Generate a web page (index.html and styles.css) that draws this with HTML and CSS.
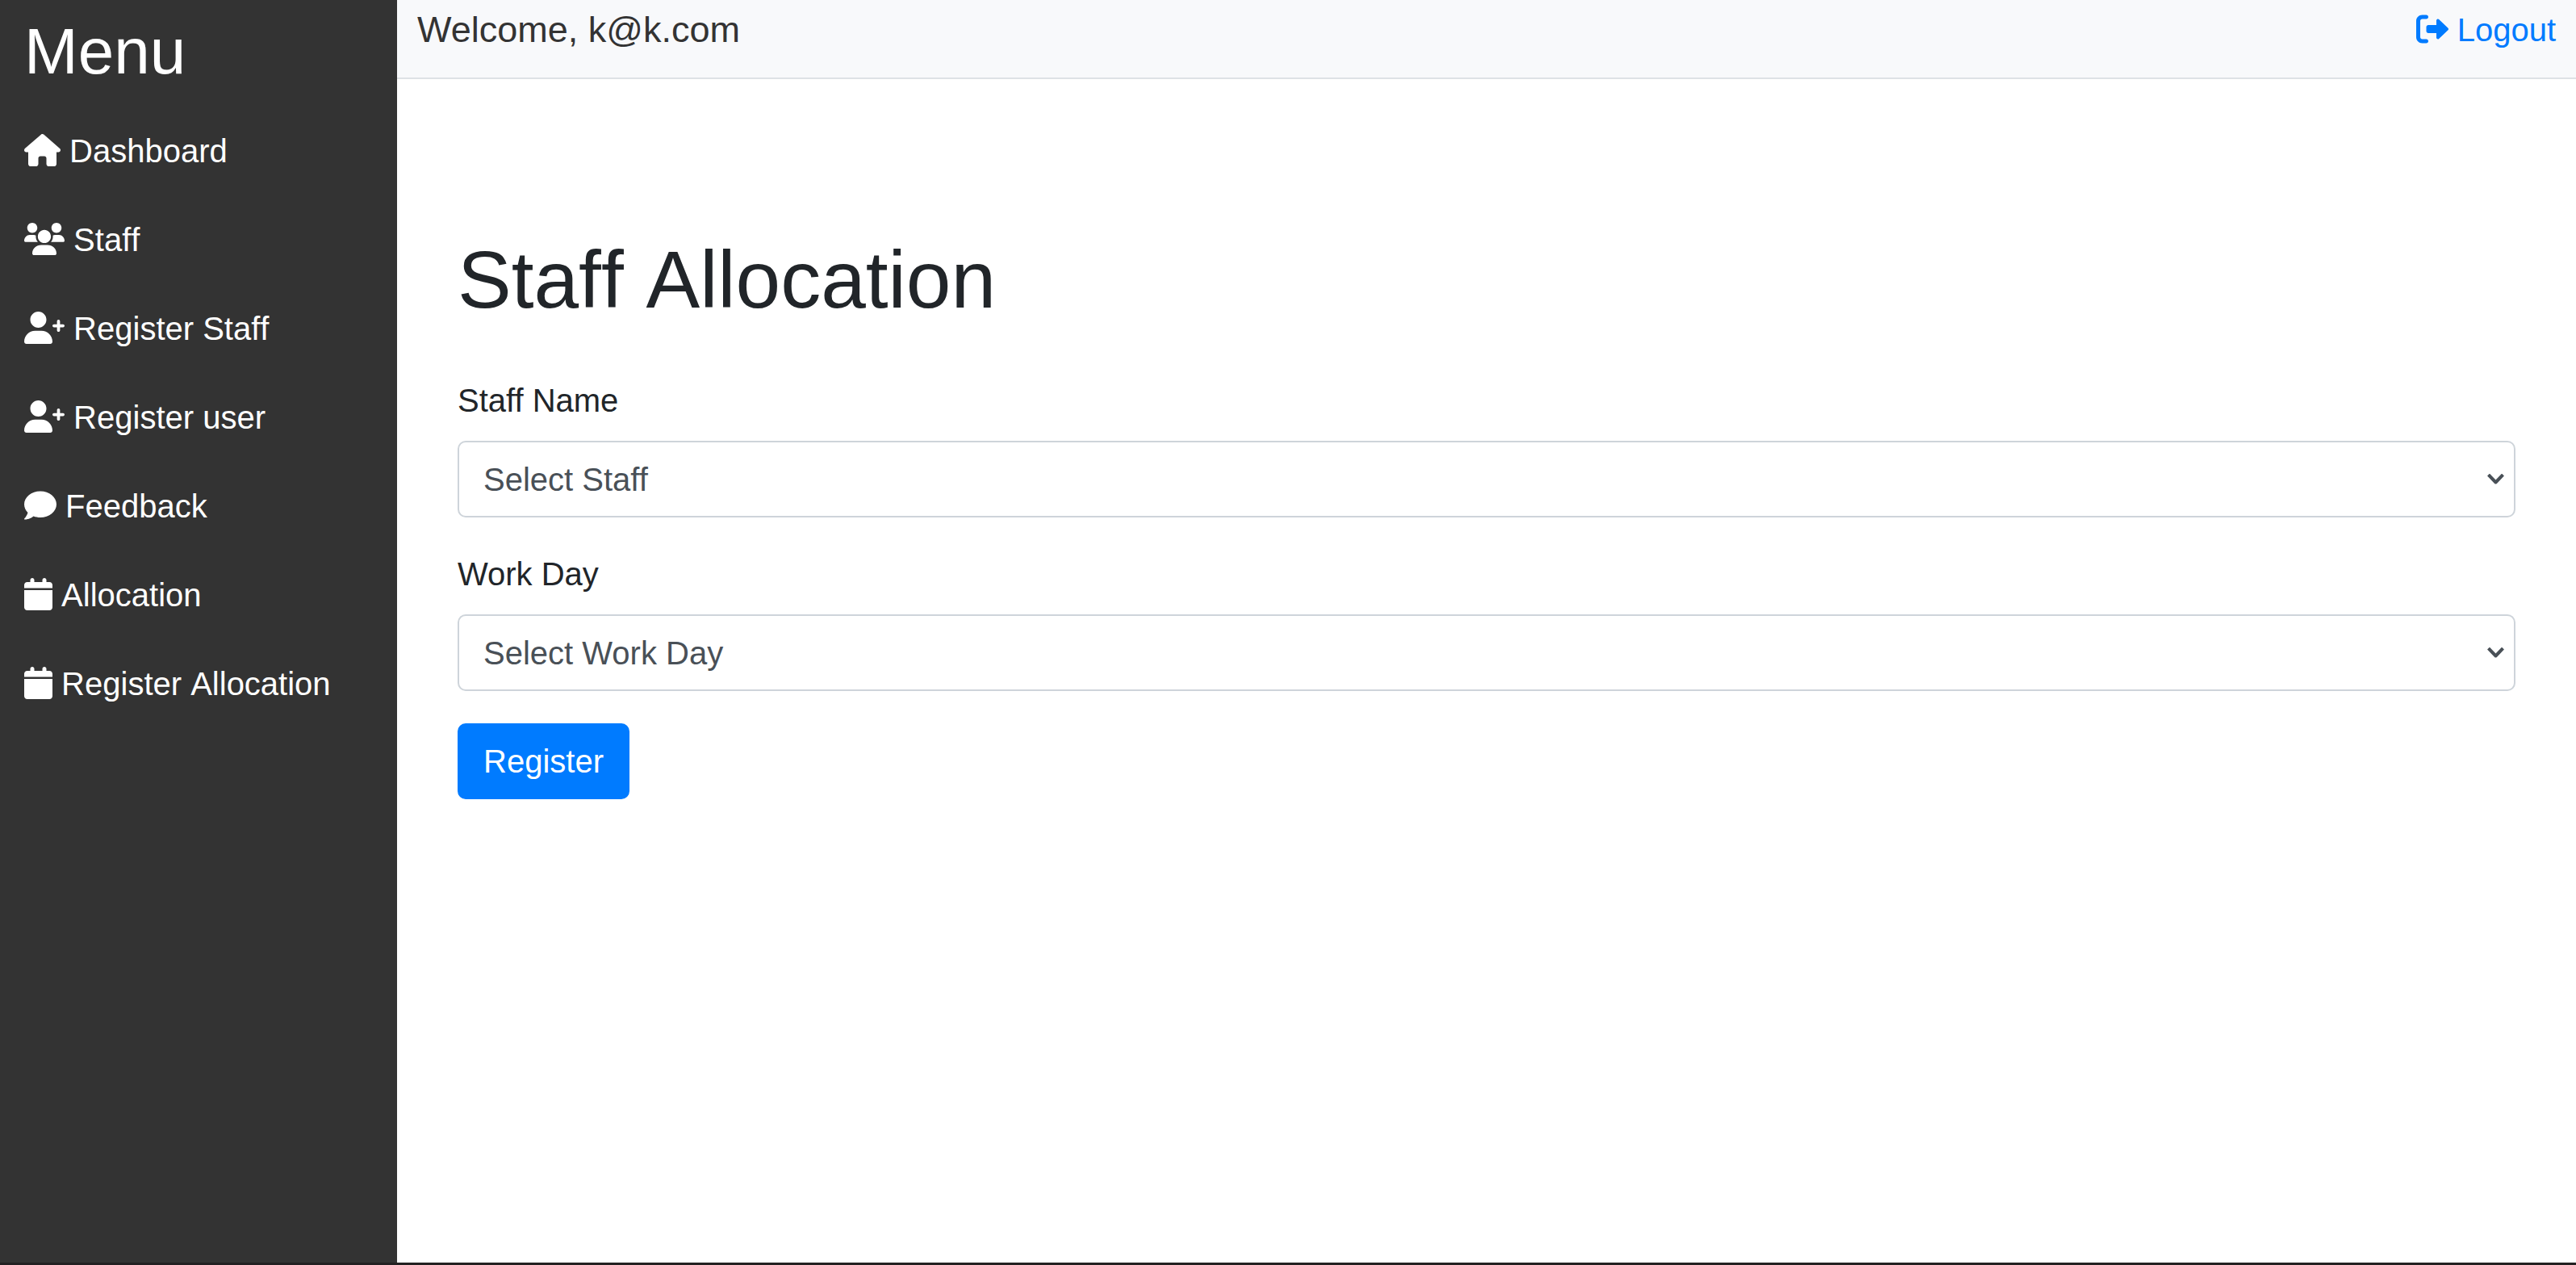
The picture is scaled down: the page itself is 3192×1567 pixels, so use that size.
FILE: index.html
```html
<!DOCTYPE html>
<html lang="en">
<head>
<meta charset="utf-8">
<meta name="viewport" content="width=device-width, initial-scale=1">
<title>Staff Allocation</title>
<link rel="stylesheet" href="styles.css">
</head>
<body>
<svg class="sprite" aria-hidden="true">
  <symbol id="house" viewBox="0 0 576 512"><path d="M575.8 255.5c0 18-15 32.1-32 32.1h-32l.7 160.2c0 2.7-.2 5.4-.5 8.1V472c0 22.1-17.9 40-40 40H456c-1.1 0-2.2 0-3.3-.1c-1.4 .1-2.8 .1-4.2 .1H416 392c-22.1 0-40-17.9-40-40V448 384c0-17.7-14.3-32-32-32H256c-17.7 0-32 14.3-32 32v64 24c0 22.1-17.9 40-40 40H160 128.1c-1.5 0-3-.1-4.5-.2c-1.2 .1-2.4 .2-3.6 .2H104c-22.1 0-40-17.9-40-40V360c0-.9 0-1.9 .1-2.8V287.6H32c-18 0-32-14-32-32.1c0-9 3-17 10-24L266.4 8c7-7 15-8 22-8s15 2 21 7L564.8 231.5c8 7 12 15 11 24z"/></symbol>
  <symbol id="users" viewBox="0 0 640 512"><path d="M319.9 320c57.4 0 104-46.6 104-104c0-57.4-46.5-104-104-104c-57.4 0-104 46.6-104 104C215.9 273.4 262.4 320 319.9 320zM369.9 352H270.1C191.6 352 128 411.7 128 485.3C128 500.1 140.7 512 156.4 512h327.2C499.3 512 512 500.1 512 485.3C512 411.7 448.4 352 369.9 352zM512 160c44.18 0 80-35.82 80-80S556.2 0 512 0c-44.18 0-80 35.82-80 80S467.8 160 512 160zM183.9 216c0-5.449 .9824-10.63 1.609-15.91C174.6 194.1 162.6 192 149.9 192H88.08C39.44 192 0 233.8 0 285.3C0 295.6 7.887 304 17.62 304h199.5C196.7 280.2 183.9 249.7 183.9 216zM128 160c44.18 0 80-35.82 80-80S172.2 0 128 0C83.82 0 48 35.82 48 80S83.82 160 128 160zM551.9 192h-61.84c-12.8 0-24.88 3.037-35.86 8.24C454.8 205.5 455.8 210.6 455.8 216c0 33.71-12.78 64.21-33.16 88h199.7C632.1 304 640 295.6 640 285.3C640 233.8 600.6 192 551.9 192z"/></symbol>
  <symbol id="user-plus" viewBox="0 0 640 512"><path d="M224 256c70.7 0 128-57.31 128-128S294.7 0 224 0C153.3 0 96 57.31 96 128S153.3 256 224 256zM274.7 304H173.3C77.61 304 0 381.6 0 477.3C0 496.5 15.52 512 34.66 512h378.7C432.5 512 448 496.5 448 477.3C448 381.6 370.4 304 274.7 304zM616 200h-48v-48C568 138.8 557.3 128 544 128s-24 10.75-24 24v48h-48C458.8 200 448 210.8 448 224s10.75 24 24 24h48v48C520 309.3 530.8 320 544 320s24-10.75 24-24v-48h48C629.3 248 640 237.3 640 224S629.3 200 616 200z"/></symbol>
  <symbol id="comment" viewBox="0 0 512 512"><path d="M256 32C114.6 32 0 125.1 0 240c0 49.6 21.4 95 57 130.7C44.5 421.1 2.7 466 2.2 466.5c-2.2 2.3-2.8 5.7-1.5 8.7S4.8 480 8 480c66.3 0 116-31.8 140.6-51.4 32.7 12.3 69 19.4 107.4 19.4 141.4 0 256-93.1 256-208S397.4 32 256 32z"/></symbol>
  <symbol id="calendar" viewBox="0 0 448 512"><path d="M96 32C96 14.33 110.3 0 128 0C145.7 0 160 14.33 160 32V64H288V32C288 14.33 302.3 0 320 0C337.7 0 352 14.33 352 32V64H400C426.5 64 448 85.49 448 112V160H0V112C0 85.49 21.49 64 48 64H96V32zM448 464C448 490.5 426.5 512 400 512H48C21.49 512 0 490.5 0 464V192H448V464z"/></symbol>
  <symbol id="logout" viewBox="0 0 512 512"><path d="M96 480h64C177.7 480 192 465.7 192 448S177.7 416 160 416H96c-17.67 0-32-14.33-32-32V128c0-17.67 14.33-32 32-32h64C177.7 96 192 81.67 192 64S177.7 32 160 32H96C42.98 32 0 74.98 0 128v256C0 437 42.98 480 96 480zM504.8 238.5l-144.1-136c-6.975-6.578-17.2-8.375-26-4.594c-8.803 3.797-14.51 12.47-14.51 22.05l-.0918 72l-128-.001c-17.69 0-32.02 14.33-32.02 32v64c0 17.67 14.34 32 32.02 32l128 .001l.0918 71.1c0 9.578 5.707 18.25 14.51 22.05c8.803 3.781 19.03 1.984 26-4.594l144.1-136C514.4 264.4 514.4 247.6 504.8 238.5z"/></symbol>
</svg>
<div class="layout">
  <aside class="sidebar">
    <h2 class="sidebar-title">Menu</h2>
    <nav class="menu">
      <a class="menu-link" href="#"><svg class="icon icon-house"><use href="#house"/></svg> Dashboard</a>
      <a class="menu-link" href="#"><svg class="icon icon-wide"><use href="#users"/></svg> Staff</a>
      <a class="menu-link" href="#"><svg class="icon icon-wide"><use href="#user-plus"/></svg> Register Staff</a>
      <a class="menu-link" href="#"><svg class="icon icon-wide"><use href="#user-plus"/></svg> Register user</a>
      <a class="menu-link" href="#"><svg class="icon"><use href="#comment"/></svg> Feedback</a>
      <a class="menu-link" href="#"><svg class="icon icon-narrow"><use href="#calendar"/></svg> Allocation</a>
      <a class="menu-link" href="#"><svg class="icon icon-narrow"><use href="#calendar"/></svg> Register Allocation</a>
    </nav>
  </aside>
  <div class="page">
    <header class="topbar">
      <span class="welcome">Welcome, k@k.com</span>
      <a class="logout" href="#"><svg class="icon"><use href="#logout"/></svg> Logout</a>
    </header>
    <main class="content">
      <h1 class="title">Staff Allocation</h1>
      <form class="form">
        <div class="field">
          <label for="staff">Staff Name</label>
          <select class="select" id="staff"><option>Select Staff</option></select>
        </div>
        <div class="field">
          <label for="day">Work Day</label>
          <select class="select" id="day"><option>Select Work Day</option></select>
        </div>
        <button class="button" type="button">Register</button>
      </form>
    </main>
  </div>
</div>
</body>
</html>
```
FILE: styles.css
```css
* {
  box-sizing: border-box;
}

body {
  margin: 0;
  min-height: 100vh;
  display: flex;
  flex-direction: column;
  border-bottom: 3px solid #232122;
  background: #fff;
  color: #212529;
  font-family: "Liberation Sans", Arial, sans-serif;
  font-size: 40px;
  line-height: 60px;
}

.sprite {
  display: none;
}

.layout {
  flex: 1;
  display: flex;
}

.sidebar {
  flex: 0 0 492px;
  padding-top: 16px;
  background: #333;
  color: #fff;
}

.sidebar-title {
  margin: 0 0 20px;
  padding: 0 30px;
  font-size: 80px;
  font-weight: 400;
  line-height: 96px;
}

.menu {
  display: flex;
  flex-direction: column;
}

.menu-link {
  padding: 25px 30px;
  color: #fff;
  font-kerning: none;
  text-decoration: none;
}

.icon {
  width: 40px;
  height: 40px;
  vertical-align: -5px;
  fill: currentColor;
}

.icon-house {
  width: 45px;
}

.icon-wide {
  width: 50px;
}

.icon-narrow {
  width: 35px;
}

.page {
  flex: 1;
  min-width: 0;
}

.topbar {
  display: flex;
  justify-content: space-between;
  align-items: center;
  padding: 3px 25px 25px;
  border-bottom: 2px solid #dee2e6;
  background: #f8f9fb;
}

.welcome {
  color: #333;
  font-size: 45px;
  line-height: 68px;
}

.logout {
  color: #007bff;
  text-decoration: none;
}

.content {
  padding: 188px 75px 75px;
}

.title {
  margin: 0 0 60px;
  font-size: 100px;
  font-weight: 400;
  font-kerning: none;
  line-height: 120px;
}

.form {
  display: flex;
  flex-direction: column;
  align-items: flex-start;
  gap: 40px;
}

.field {
  align-self: stretch;
  display: flex;
  flex-direction: column;
  gap: 20px;
}

.select {
  appearance: none;
  width: 100%;
  height: 95px;
  padding: 0 60px 0 30px;
  border: 2px solid #ced4da;
  border-radius: 10px;
  background: #fff url("data:image/svg+xml,%3Csvg xmlns='http://www.w3.org/2000/svg' viewBox='0 0 21 13'%3E%3Cpath d='M1.5 1L10.5 10.5L19.5 1' fill='none' stroke='%23495057' stroke-width='4' stroke-linejoin='round'/%3E%3C/svg%3E") no-repeat right 12px center / 21px 13px;
  color: #495057;
  font: inherit;
}

.button {
  height: 94px;
  padding: 0 30px;
  border: 2px solid #007bff;
  border-radius: 10px;
  background: #007bff;
  color: #fff;
  font: inherit;
}
```
